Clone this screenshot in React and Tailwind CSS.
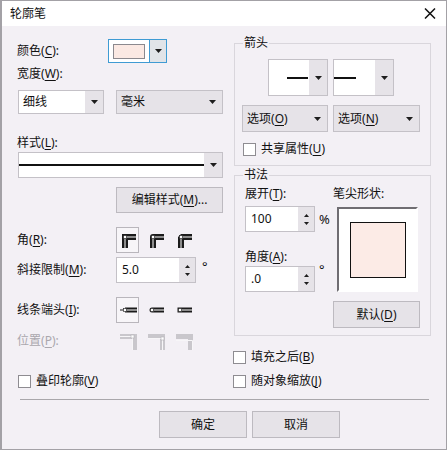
import React from 'react';

const font = { fontFamily: '"Noto Sans", "Noto Sans CJK SC", sans-serif' };

const Caret = () => (
  <svg width="7" height="4" viewBox="0 0 7 4">
    <path d="M0 0h7L3.5 4z" fill="#1e1e1e" />
  </svg>
);

const Key = ({ k }) => <span className="underline underline-offset-2">{k}</span>;

// label like 颜色(C):
const Label = ({ text, k, colon = true, className = '' }) => (
  <span className={`whitespace-nowrap ${className}`}>
    {text}(<Key k={k} />){colon ? ':' : ''}
  </span>
);

const WhiteCombo = ({ className, children, arrowW = 'w-[17px]' }) => (
  <div className={`flex border border-[#c4c1c7] bg-white ${className}`}>
    <div className="flex-1 flex items-center pl-[4px]">{children}</div>
    <div className={`${arrowW} bg-[#e6e3e8] flex items-center justify-center`}>
      <Caret />
    </div>
  </div>
);

const GrayCombo = ({ className, children }) => (
  <div className={`flex items-center justify-between border border-[#c4c1c7] bg-[#e6e3e8] pl-[4px] pr-[6px] ${className}`}>
    <span>{children}</span>
    <Caret />
  </div>
);

const Button = ({ className, children }) => (
  <div className={`flex items-center justify-center border border-[#bdbac0] bg-[#e6e3e8] ${className}`}>
    {children}
  </div>
);

const Spin = ({ className, value }) => (
  <div className={`flex border border-[#c4c1c7] bg-white ${className}`}>
    <div className="flex-1 flex items-center pl-[5px]">{value}</div>
    <div className="w-[16px] bg-[#e6e3e8] flex flex-col items-center justify-center gap-[5px]">
      <svg width="5" height="3" viewBox="0 0 5 3"><path d="M0 3h5L2.5 0z" fill="#1e1e1e" /></svg>
      <svg width="5" height="3" viewBox="0 0 5 3"><path d="M0 0h5L2.5 3z" fill="#1e1e1e" /></svg>
    </div>
  </div>
);

const Check = ({ children }) => (
  <div className="flex items-center h-[16px] gap-[5px]">
    <div className="w-[13px] h-[13px] bg-white border border-[#8e8c91]" />
    <span>{children}</span>
  </div>
);

const Corner = ({ join }) => (
  <svg width="16" height="16" viewBox="0 0 16 16">
    <path d="M5 16V5h11" stroke="#1b1b1b" strokeWidth="6" fill="none" strokeLinejoin={join} />
    <path d="M5 16V5h11" stroke="#fff" strokeWidth="1" fill="none" />
    <rect x="3.5" y="3.5" width="3" height="3" fill="#fff" stroke="#1b1b1b" strokeWidth="0.6" />
  </svg>
);

const Cap = ({ cap }) => (
  <svg width="18" height="8" viewBox="0 0 18 8">
    {cap === 'butt' && <path d="M1 4h5" stroke="#1b1b1b" strokeWidth="1" />}
    <path d="M6 4h12" stroke="#1b1b1b" strokeWidth="5" strokeLinecap={cap} />
    <path d="M6 4h12" stroke="#fff" strokeWidth="1" />
    <rect x="4.5" y="2.5" width="3" height="3" fill="#fff" stroke="#1b1b1b" strokeWidth="0.6" />
  </svg>
);

// outline position: line drawn outside / centred / inside the path
const Position = ({ x, dot }) => (
  <svg width="17" height="17" viewBox="0 0 17 17">
    <rect x="0" y="1" width="17" height="5" fill="#c9c7cc" />
    <rect x="12" y="1" width="5" height="16" fill="#c9c7cc" />
    <path d={`M0 ${x - 9}.5H${x}.5V17`} stroke="#f7f6f8" strokeWidth="1" fill="none" />
    {dot && <rect x={x - 1} y={x - 10} width="3" height="3" fill="#fff" stroke="#b3b1b6" strokeWidth="0.6" />}
  </svg>
);

export default function App() {
  return (
    <div style={font} className="w-[447px] h-[450px] border border-l-2 border-[#a3a1a6] flex flex-col text-[12px] text-[#111] leading-[16px]">
      {/* title bar */}
      <div className="h-[25px] bg-white flex items-center justify-between pl-[8px] pr-[10px]">
        <span className="text-[12px]">轮廓笔</span>
        <svg width="12" height="11" viewBox="0 0 12 11">
          <path d="M1 0.5l10 10M11 0.5l-10 10" stroke="#111" strokeWidth="1.5" />
        </svg>
      </div>

      {/* body */}
      <div className="flex-1 bg-[#f3f0f5] pl-[15px] flex flex-col">
        <div className="flex">
          {/* left column */}
          <div className="w-[206px] flex flex-col">
            <div className="mt-[13px] h-[24px] flex items-center">
              <Label text="颜色" k="C" className="w-[91px]" />
              <div className="w-[59px] h-[24px] flex border border-[#3f9bd3]">
                <div className="flex-1 bg-white flex items-center pl-[4px]">
                  <div className="w-[32px] h-[15px] bg-[#fbe9e3] border border-[#8b898e]" />
                </div>
                <div className="w-[17px] bg-[#e1e4e8] border-l border-[#3f9bd3] flex items-center justify-center">
                  <Caret />
                </div>
              </div>
            </div>
            <div className="mt-[2px] h-[18px] flex items-center">
              <Label text="宽度" k="W" />
            </div>
            <div className="mt-[7px] h-[24px] flex">
              <WhiteCombo className="ml-[1px] w-[86px]" arrowW="w-[18px]">细线</WhiteCombo>
              <GrayCombo className="ml-[12px] w-[107px]">毫米</GrayCombo>
            </div>
            <div className="mt-[20px] h-[18px] flex items-center">
              <Label text="样式" k="L" />
            </div>
            <div className="ml-[1px] w-[205px] h-[26px] flex border border-[#c4c1c7] bg-white">
              <div className="flex-1 flex items-center">
                <div className="w-full h-[1.5px] bg-[#111]" />
              </div>
              <div className="w-[18px] bg-[#e6e3e8] flex items-center justify-center">
                <Caret />
              </div>
            </div>
            <Button className="mt-[9px] ml-[99px] w-[107px] h-[26px]">
              <span>编辑样式(<Key k="M" />)...</span>
            </Button>
            <div className="mt-[14px] h-[26px] flex items-center">
              <Label text="角" k="R" className="w-[99px]" />
              <div className="w-[23px] h-[26px] border border-[#b9b6bc] bg-[#f7f5f8] flex items-center justify-center">
                <Corner join="miter" />
              </div>
              <div className="ml-[9px]"><Corner join="round" /></div>
              <div className="ml-[12px]"><Corner join="bevel" /></div>
            </div>
            <div className="mt-[4px] h-[26px] flex items-center">
              <Label text="斜接限制" k="M" className="w-[99px]" />
              <Spin className="w-[80px] h-[26px]" value="5.0" />
              <span className="self-start ml-[6px] mt-[1px] text-[13px]">°</span>
            </div>
            <div className="mt-[14px] h-[26px] flex items-center">
              <Label text="线条端头" k="I" className="w-[99px]" />
              <div className="w-[23px] h-[26px] border border-[#b9b6bc] bg-[#f7f5f8] flex items-center justify-center">
                <Cap cap="butt" />
              </div>
              <div className="ml-[7px]"><Cap cap="round" /></div>
              <div className="ml-[10px]"><Cap cap="square" /></div>
            </div>
            <div className="mt-[9px] h-[18px] flex items-center text-[#aaa7ad]">
              <Label text="位置" k="P" className="w-[103px]" />
              <Position x={12} dot />
              <div className="ml-[11px]"><Position x={14} dot /></div>
              <div className="ml-[11px]"><Position x={16} /></div>
            </div>
            <div className="mt-[23px] ml-[1px]">
              <Check>叠印轮廓(<Key k="V" />)</Check>
            </div>
          </div>

          {/* right column */}
          <div className="ml-[10px] w-[199px] flex flex-col">
            <fieldset className="mt-[9px] ml-[1px] w-[197px] border border-[#d9d6dc] pb-[8px]">
              <legend className="ml-[8px] px-[1px] leading-[16px]">箭头</legend>
              <div className="mt-[8px] ml-[33px] h-[37px] flex gap-[5px]">
                <div className="w-[60px] flex border border-[#c4c1c7] bg-white">
                  <div className="flex-1 flex items-center justify-end pr-[1px]">
                    <div className="w-[21px] h-[2px] bg-[#111]" />
                  </div>
                  <div className="w-[18px] bg-[#e6e3e8] flex items-center justify-center"><Caret /></div>
                </div>
                <div className="w-[61px] flex border border-[#c4c1c7] bg-white">
                  <div className="flex-1 flex items-center">
                    <div className="w-[22px] h-[2px] bg-[#111]" />
                  </div>
                  <div className="w-[18px] bg-[#e6e3e8] flex items-center justify-center"><Caret /></div>
                </div>
              </div>
              <div className="mt-[9px] ml-[7px] h-[27px] flex gap-[5px]">
                <GrayCombo className="w-[86px]"><Label text="选项" k="O" colon={false} /></GrayCombo>
                <GrayCombo className="w-[87px]"><Label text="选项" k="N" colon={false} /></GrayCombo>
              </div>
              <div className="mt-[9px] ml-[8px]">
                <Check>共享属性(<Key k="U" />)</Check>
              </div>
            </fieldset>

            <fieldset className="mt-[1px] ml-[1px] w-[197px] border border-[#d9d6dc] pb-[7px]">
              <legend className="ml-[8px] px-[1px] leading-[16px]">书法</legend>
              <div className="flex ml-[10px]">
                <div className="w-[88px] flex flex-col">
                  <div className="mt-[2px] h-[18px] flex items-center">
                    <Label text="展开" k="T" />
                  </div>
                  <div className="mt-[3px] h-[26px] flex items-center">
                    <Spin className="w-[70px] h-[26px]" value="100" />
                    <span className="ml-[4px] text-[13px]">%</span>
                  </div>
                  <div className="mt-[16px] h-[18px] flex items-center">
                    <Label text="角度" k="A" />
                  </div>
                  <div className="h-[26px] flex items-center">
                    <Spin className="w-[70px] h-[26px]" value=".0" />
                    <span className="self-start ml-[4px] mt-[-5px] text-[13px]">°</span>
                  </div>
                </div>
                <div className="flex flex-col">
                  <div className="mt-[2px] h-[18px] flex items-center">笔尖形状:</div>
                  <div className="mt-[4px] ml-[4px] w-[81px] h-[85px] bg-white border-2 border-t-[#6f6d72] border-l-[#6f6d72] border-r-white border-b-white flex items-center justify-center">
                    <div className="w-[56px] h-[56px] bg-[#fcebe6] border border-[#111]" />
                  </div>
                  <Button className="mt-[9px] w-[87px] h-[27px]">
                    <span>默认(<Key k="D" />)</span>
                  </Button>
                </div>
              </div>
            </fieldset>

            <div className="mt-[13px]">
              <Check>填充之后(<Key k="B" />)</Check>
            </div>
            <div className="mt-[8px]">
              <Check>随对象缩放(<Key k="J" />)</Check>
            </div>
          </div>
        </div>

        {/* separator + buttons */}
        <div className="mt-[10px] ml-[3px] w-[409px] h-[1px] bg-[#a9a7ab]" />
        <div className="mt-[11px] ml-[142px] flex gap-[5px]">
          <Button className="w-[88px] h-[27px]">确定</Button>
          <Button className="w-[88px] h-[27px]">取消</Button>
        </div>
      </div>
    </div>
  );
}
